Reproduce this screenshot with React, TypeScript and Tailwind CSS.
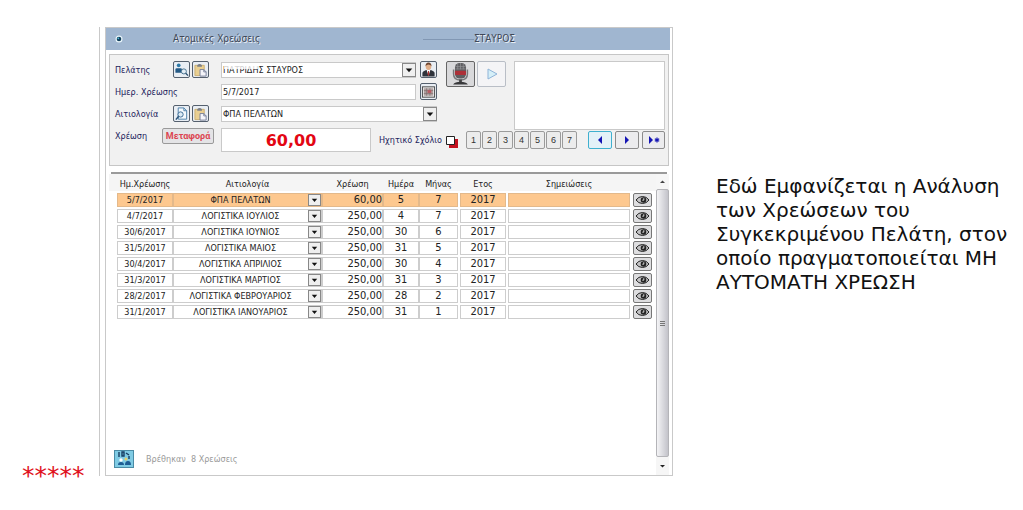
import React from 'react';

interface Charge {
    date: string;
    reason: string;
    amount: string;
    day: number;
    month: number;
    year: number;
}

const charges: Charge[] = [
    { date: '5/7/2017', reason: 'ΦΠΑ ΠΕΛΑΤΩΝ', amount: '60,00', day: 5, month: 7, year: 2017 },
    { date: '4/7/2017', reason: 'ΛΟΓΙΣΤΙΚΑ ΙΟΥΛΙΟΣ', amount: '250,00', day: 4, month: 7, year: 2017 },
    { date: '30/6/2017', reason: 'ΛΟΓΙΣΤΙΚΑ ΙΟΥΝΙΟΣ', amount: '250,00', day: 30, month: 6, year: 2017 },
    { date: '31/5/2017', reason: 'ΛΟΓΙΣΤΙΚΑ ΜΑΙΟΣ', amount: '250,00', day: 31, month: 5, year: 2017 },
    { date: '30/4/2017', reason: 'ΛΟΓΙΣΤΙΚΑ ΑΠΡΙΛΙΟΣ', amount: '250,00', day: 30, month: 4, year: 2017 },
    { date: '31/3/2017', reason: 'ΛΟΓΙΣΤΙΚΑ ΜΑΡΤΙΟΣ', amount: '250,00', day: 31, month: 3, year: 2017 },
    { date: '28/2/2017', reason: 'ΛΟΓΙΣΤΙΚΑ ΦΕΒΡΟΥΑΡΙΟΣ', amount: '250,00', day: 28, month: 2, year: 2017 },
    { date: '31/1/2017', reason: 'ΛΟΓΙΣΤΙΚΑ ΙΑΝΟΥΑΡΙΟΣ', amount: '250,00', day: 31, month: 1, year: 2017 },
];

const DownArrow: React.FC = () => (
    <svg viewBox="0 0 13 13" className="w-full h-full">
        <path d="M3 5h7L6.500 9z" fill="#111" />
    </svg>
);

const SearchCustomerIcon: React.FC = () => (
    <svg viewBox="0 0 16 16" className="w-4 h-4">
        <circle cx="5" cy="3" r="2" fill="#2f7aa8" />
        <path d="M1.500 11V7.500q0-1.500 1.500-1.500h4q1.500 0 1.500 1.500V11z" fill="#245a86" />
        <circle cx="10.500" cy="9.500" r="2.700" fill="#e4eef6" stroke="#46718f" />
        <path d="M12.500 11.500l2.500 2.500" stroke="#2c4f6e" strokeWidth="1.500" />
    </svg>
);

const SearchPageIcon: React.FC = () => (
    <svg viewBox="0 0 16 16" className="w-4 h-4">
        <path d="M4.500 1.500h6l3 3v9h-9z" fill="#f4f9fd" stroke="#4c7fa8" />
        <path d="M10.500 1.500v3h3" fill="none" stroke="#4c7fa8" />
        <circle cx="7" cy="8.500" r="2.800" fill="#dcebf5" stroke="#3c6c94" />
        <path d="M5 10.500L2 14" stroke="#2c557a" strokeWidth="1.600" />
    </svg>
);

const PasteIcon: React.FC = () => (
    <svg viewBox="0 0 16 16" className="w-4 h-4">
        <path d="M2 3h10v11H2z" fill="#e9cf92" stroke="#c3a45f" strokeWidth="0.800" />
        <path d="M4.500 4.500V3q2.500-3 5 0v1.500z" fill="#7c7f86" />
        <path d="M7.500 7.500h4l2.500 2.500v4.500H7.500z" fill="#f5f5fa" stroke="#77809a" />
        <path d="M11.500 7.500V10H14" fill="none" stroke="#77809a" />
    </svg>
);

const PersonIcon: React.FC = () => (
    <svg viewBox="0 0 16 16" className="w-4 h-4">
        <path d="M5 4q0-3.500 3-3.500T11 4q0 4-3 4T5 4z" fill="#dfae8a" />
        <path d="M4.800 4Q5 0 8 0t3.200 4Q10 2 8 2T4.800 4z" fill="#6b4430" />
        <path d="M1.500 15v-4q.5-2 4-3h5q3.500 1 4 3v4z" fill="#30343c" />
        <path d="M6 8l2 6 2-6z" fill="#fff" />
        <path d="M7.500 9h1l.5 4-1 1-1-1z" fill="#a33" />
    </svg>
);

const CalendarIcon: React.FC = () => (
    <svg viewBox="0 0 16 16" className="w-4 h-4">
        <rect x="1.500" y="2.500" width="13" height="11" fill="#eee" stroke="#444" />
        <rect x="3" y="4" width="10" height="8" fill="#b0a3a3" />
        <path d="M3 6.500h10M3 9.500h10M6 4v8M9.500 4v8" stroke="#7b6a6a" strokeWidth="0.700" />
        <rect x="7" y="6" width="4" height="3" fill="#b85b62" />
    </svg>
);

const MicIcon: React.FC = () => (
    <svg viewBox="0 0 28 26" className="w-7 h-6">
        <rect x="8" y="1" width="12" height="17" rx="5" fill="#5e5e61" />
        <path d="M8.500 5h11M8.500 7.500h11M11 2v6M14 1v7M17 2v6" stroke="#98989b" strokeWidth="0.700" />
        <rect x="8" y="9.500" width="12" height="4.500" rx="1" fill="#ad3038" />
        <path d="M6.500 8v5q0 6.500 7.500 6.500t7.500-6.500V8" fill="none" stroke="#77777a" strokeWidth="1.600" />
        <path d="M14 19v3" stroke="#444" strokeWidth="3" />
        <path d="M6 24.500q2-3 8-3t8 3z" fill="#38383a" />
    </svg>
);

const EyeIcon: React.FC = () => (
    <svg viewBox="0 0 17 12" className="w-full h-full">
        <path d="M2 6Q4.500 2.500 8.500 2.500T15 6q-2.500 3.500-6.500 3.500T2 6z" fill="#c4c4c6" stroke="#222" />
        <circle cx="9.500" cy="6" r="2.800" fill="#222" />
        <path d="M9.800 4.200v2H8.300" fill="none" stroke="#eee" strokeWidth="0.900" />
    </svg>
);

interface IconButtonProps {
    label: string;
    children: React.ReactNode;
}

const IconButton: React.FC<IconButtonProps> = ({ label, children }) => (
    <button
        type="button"
        aria-label={label}
        className="flex items-center justify-center shrink-0 w-[17px] h-[17px] rounded-[2px] border border-[#55606e] bg-[#e9eef4]"
    >
        {children}
    </button>
);

interface ComboProps {
    id: string;
    value: string;
    children?: React.ReactNode;
}

const Combo: React.FC<ComboProps> = ({ id, value, children }) => (
    <div className="relative flex-1 h-4">
        <select
            id={id}
            className="appearance-none block w-full h-4 px-px border border-[#c9c9c9] bg-white leading-3 text-[#222]"
        >
            <option>{value}</option>
        </select>
        {children}
        <span className="pointer-events-none absolute right-0 top-px w-[14px] h-[14px] border border-[#888] bg-[#efefef]">
            <DownArrow />
        </span>
    </div>
);

const ChargeForm: React.FC = () => (
    <form className="mx-[3px] mt-1 h-[112px] border border-[#c6c6c6] bg-[#f1f1f1] pl-[5px] pr-[3px] pt-[6px] text-[9px] text-[#23235c]">
        <div className="flex">
            <div className="w-[322px] shrink-0 flex flex-col gap-[5px]">
                <div className="flex items-center h-[17px]">
                    <label htmlFor="customer" className="w-[58px]">Πελάτης</label>
                    <div className="flex gap-[2px] w-[48px]">
                        <IconButton label="Εύρεση πελάτη"><SearchCustomerIcon /></IconButton>
                        <IconButton label="Επικόλληση πελάτη"><PasteIcon /></IconButton>
                    </div>
                    <Combo id="customer" value="ΠΑΤΡΙΔΗΣ ΣΤΑΥΡΟΣ">
                        <span className="pointer-events-none absolute left-[3px] top-px w-[34px] h-[6px] bg-white/80" />
                    </Combo>
                    <div className="ml-1"><IconButton label="Καρτέλα πελάτη"><PersonIcon /></IconButton></div>
                </div>
                <div className="flex items-center h-[17px]">
                    <label htmlFor="chargeDate" className="w-[106px]">Ημερ. Χρέωσης</label>
                    <input
                        id="chargeDate"
                        defaultValue="5/7/2017"
                        className="flex-1 min-w-0 h-4 px-px border border-[#c9c9c9] bg-white text-[#222]"
                    />
                    <div className="ml-1"><IconButton label="Ημερολόγιο"><CalendarIcon /></IconButton></div>
                </div>
                <div className="flex items-center h-[17px]">
                    <label htmlFor="reason" className="w-[58px]">Αιτιολογία</label>
                    <div className="flex gap-[2px] w-[48px]">
                        <IconButton label="Εύρεση αιτιολογίας"><SearchPageIcon /></IconButton>
                        <IconButton label="Επικόλληση αιτιολογίας"><PasteIcon /></IconButton>
                    </div>
                    <Combo id="reason" value="ΦΠΑ ΠΕΛΑΤΩΝ" />
                </div>
            </div>
            <div className="flex gap-[2px] ml-[9px] shrink-0">
                <button type="button" aria-label="Ηχογράφηση" className="flex items-center justify-center w-[29px] h-[26px] rounded-[2px] border border-[#666] bg-[#d9d9db]">
                    <MicIcon />
                </button>
                <button type="button" aria-label="Αναπαραγωγή" className="flex items-center justify-center w-[29px] h-[26px] rounded-[2px] border border-[#b9bec6] bg-[#f4f4f6]">
                    <svg viewBox="0 0 12 12" className="w-3 h-3">
                        <path d="M2 1l9 5-9 5z" fill="#d5eff8" stroke="#8fb4d8" />
                    </svg>
                </button>
            </div>
            <textarea
                aria-label="Σχόλιο"
                className="block resize-none flex-1 min-w-0 h-[69px] ml-2 border border-[#c9c9c9] bg-white"
            />
        </div>
        <div className="flex items-center -mt-[2px]">
            <label htmlFor="amount" className="w-[47px] pb-2">Χρέωση</label>
            <button type="button" className="w-[52px] h-4 mb-2 rounded-[2px] border border-[#9a9a9a] bg-[#e4e4e6] font-[Roboto,sans-serif] font-bold leading-3 text-[#dc4450]">
                Μεταφορά
            </button>
            <input
                id="amount"
                defaultValue="60,00"
                className="w-[150px] h-6 ml-[7px] pr-[10px] border border-[#c9c9c9] bg-white text-center font-['DejaVu_Sans',sans-serif] font-bold text-[16px] leading-5 text-[#e30613]"
            />
            <span className="ml-2 w-[60px] whitespace-nowrap">Ηχητικό Σχόλιο</span>
            <svg viewBox="0 0 12 12" className="w-3 h-3 ml-[7px] mt-1">
                <path d="M3 3h9v9H3z" fill="#c4121f" />
                <path d="M.5.5h8v8h-8z" fill="#fff" stroke="#222" />
            </svg>
            <div className="flex ml-2">
                {[1, 2, 3, 4, 5, 6, 7].map((n) => (
                    <button
                        key={n}
                        type="button"
                        className="w-[15px] h-[18px] mr-px rounded-[2px] border border-[#9b9b9b] bg-[#ececec] font-['Liberation_Sans',sans-serif] leading-3 text-[#333]"
                    >
                        {n}
                    </button>
                ))}
            </div>
            <div className="flex gap-[3px] ml-auto">
                <button type="button" aria-label="Προηγούμενο" className="flex items-center justify-center w-6 h-[18px] rounded-[2px] border border-[#3fb0cf] bg-[#e3f1f8]">
                    <svg viewBox="0 0 10 10" className="w-[10px] h-[10px]"><path d="M7 1v8L3 5z" fill="#1414b4" /></svg>
                </button>
                <button type="button" aria-label="Επόμενο" className="flex items-center justify-center w-6 h-[18px] rounded-[2px] border border-[#8c8c8c] bg-[#ececee]">
                    <svg viewBox="0 0 10 10" className="w-[10px] h-[10px]"><path d="M3 1v8l4-4z" fill="#1414b4" /></svg>
                </button>
                <button type="button" aria-label="Νέο" className="flex items-center justify-center w-[23px] h-[18px] rounded-[2px] border border-[#8c8c8c] bg-[#ececee]">
                    <svg viewBox="0 0 14 10" className="w-[14px] h-[10px]">
                        <path d="M2 1v8l4-4z" fill="#1414b4" />
                        <path d="M10 2.500v5M7.800 3.800l4.400 2.400M12.200 3.800L7.800 6.200" stroke="#1414b4" strokeWidth="1.200" />
                    </svg>
                </button>
            </div>
        </div>
    </form>
);

const ChargeTable: React.FC = () => (
    <table className="w-full table-fixed border-separate border-spacing-x-0 border-spacing-y-[2px] text-[#222]">
        <colgroup>
            <col className="w-[56px]" />
            <col className="w-[149px]" />
            <col className="w-[61px]" />
            <col className="w-[36px]" />
            <col className="w-[39px]" />
            <col className="w-[2px]" />
            <col className="w-[46px]" />
            <col className="w-[2px]" />
            <col />
            <col className="w-[22px]" />
        </colgroup>
        <thead>
            <tr className="h-[15px] text-[9px] leading-[14px] whitespace-nowrap">
                <th className="p-0 font-normal">Ημ.Χρέωσης</th>
                <th className="p-0 font-normal">Αιτιολογία</th>
                <th className="p-0 font-normal">Χρέωση</th>
                <th className="p-0 font-normal">Ημέρα</th>
                <th className="p-0 font-normal">Μήνας</th>
                <th className="p-0" />
                <th className="p-0 font-normal">Ετος</th>
                <th className="p-0" />
                <th className="p-0 font-normal">Σημειώσεις</th>
                <th className="p-0" />
            </tr>
        </thead>
        <tbody>
            {charges.map((charge, index) => {
                const cell = `p-0 h-[14px] border ${index === 0 ? 'border-[#e3b98b] bg-[#fdc88f]' : 'border-[#cdcdcd] bg-white'}`;
                return (
                    <tr key={charge.date} className="h-[14px] text-[11px] leading-3 text-center">
                        <td className={cell}><span className="block text-[9px]">{charge.date}</span></td>
                        <td className={cell}>
                            <div className="relative h-3">
                                <select
                                    aria-label="Αιτιολογία"
                                    className="appearance-none block w-full h-3 pr-[14px] text-[9px] leading-3 [text-align-last:center]"
                                >
                                    <option>{charge.reason}</option>
                                </select>
                                <span className="pointer-events-none absolute right-0 top-0 w-[13px] h-3 border border-[#888] bg-[#efefef]">
                                    <DownArrow />
                                </span>
                            </div>
                        </td>
                        <td className={`${cell} text-right`}>{charge.amount}</td>
                        <td className={cell}>{charge.day}</td>
                        <td className={cell}>{charge.month}</td>
                        <td className="p-0" />
                        <td className={cell}>{charge.year}</td>
                        <td className="p-0" />
                        <td className={cell} />
                        <td className="p-0 pl-[3px]">
                            <button type="button" aria-label="Προβολή" className="block w-[19px] h-[14px] rounded-[2px] border border-[#777] bg-[#dedee0]">
                                <EyeIcon />
                            </button>
                        </td>
                    </tr>
                );
            })}
        </tbody>
    </table>
);

const ScrollBar: React.FC = () => (
    <div className="flex flex-col w-[13px] bg-[#f6f6f6]">
        <svg viewBox="0 0 13 13" className="w-[13px] h-[15px]"><path d="M4 8h5L6.500 5.500z" fill="#444" /></svg>
        <div className="flex flex-1 flex-col items-center justify-center gap-px rounded-[2px] border border-[#b4b4b8] bg-linear-to-r from-[#f4f4f6] to-[#c3c3ca]">
            <span className="w-[5px] h-px bg-[#777]" />
            <span className="w-[5px] h-px bg-[#777]" />
            <span className="w-[5px] h-px bg-[#777]" />
        </div>
        <svg viewBox="0 0 13 13" className="w-[13px] h-[18px]"><path d="M4 5.500h5L6.500 8z" fill="#222" /></svg>
    </div>
);

const App: React.FC = () => {
    return (
        <div className="flex pt-[27px] pb-8 bg-white font-['DejaVu_Sans_Condensed','DejaVu_Sans',sans-serif] text-[10px] leading-[14px]">
            <div className="flex items-end w-[99px] pl-[22px] shrink-0">
                <p className="-mb-3 font-['DejaVu_Sans',sans-serif] text-[25px] leading-6 text-[#e01020]">*****</p>
            </div>
            <div className="flex-1 min-w-[574px] border-l border-[#c9c9c9] pl-[5px]">
                <div className="flex flex-col border border-[#c9c9c9]">
                    <header className="flex items-center h-[22px] mr-[2px] bg-[#a0b6d0]">
                        <svg viewBox="0 0 8 8" className="w-2 h-2 ml-[9px]">
                            <circle cx="4" cy="4" r="3.500" fill="#eaf6fb" />
                            <circle cx="4" cy="4" r="2.300" fill="#123f5c" />
                            <circle cx="3.300" cy="3.300" r="0.900" fill="#4fb7d3" />
                        </svg>
                        <h1 className="ml-[50px] w-[250px] text-[#3f4858] [text-shadow:1px_1px_0_#e8eef5]">Ατομικές Χρεώσεις</h1>
                        <span className="w-[51px] h-px bg-[#8197b3]" />
                        <h2 className="text-[#3f4858] [text-shadow:1px_1px_0_#e8eef5]">ΣΤΑΥΡΟΣ</h2>
                    </header>
                    <ChargeForm />
                    <div className="mx-[5px] mt-[6px] h-[2px] bg-[#9a9a9a]" />
                    <div className="flex mx-[3px] h-[301px] bg-[linear-gradient(#f5f5f5_17px,#fff_17px)]">
                        <div className="flex flex-1 flex-col pl-2 pr-1">
                            <ChargeTable />
                            <div className="flex items-center gap-3 mt-auto mb-[7px] -ml-[3px]">
                                <button type="button" aria-label="Εύρεση χρεώσεων" className="w-5 h-[18px] border border-[#4a8ba5] bg-[#7fcbe4]">
                                    <svg viewBox="0 0 18 16" className="w-full h-full">
                                        <path d="M4 1v5M7 1h2v4H7zM11 2l3 2M14 5v3" fill="none" stroke="#173e63" strokeWidth="1.400" />
                                        <circle cx="6" cy="9" r="1.700" fill="#fff" />
                                        <circle cx="11" cy="8" r="1.500" fill="#e9d269" />
                                        <path d="M3 14q0-3 3-3t3 3zM10 14q0-4 3-4t3 4z" fill="#1e5d93" />
                                    </svg>
                                </button>
                                <p className="text-[9px] text-[#9a9a9a] whitespace-pre">Βρέθηκαν  8 Χρεώσεις</p>
                            </div>
                        </div>
                        <ScrollBar />
                    </div>
                </div>
            </div>
            <aside className="w-[350px] shrink-0 pl-[43px] pr-3 pt-[147px]">
                <p className="font-['DejaVu_Sans',sans-serif] text-[20px] leading-6 text-[#111]">
                    Εδώ Εμφανίζεται η Ανάλυση των Χρεώσεων του Συγκεκριμένου Πελάτη, στον οποίο πραγματοποιείται ΜΗ ΑΥΤΟΜΑΤΗ ΧΡΕΩΣΗ
                </p>
            </aside>
        </div>
    );
};

export default App;
